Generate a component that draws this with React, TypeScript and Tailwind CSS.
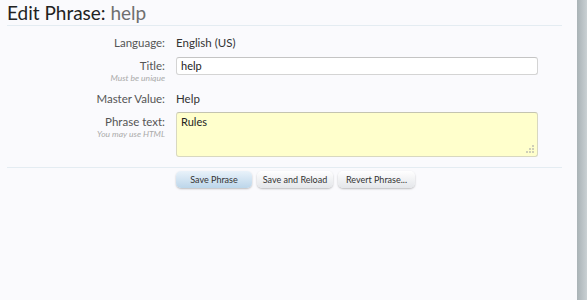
import React from "react";

function Grip() {
  return (
    <svg width="8" height="8" viewBox="0 0 8 8" className="absolute right-[3px] bottom-[3px]">
      <rect x="6" y="0" width="2" height="2" fill="#cfcfb8" />
      <rect x="3" y="3" width="2" height="2" fill="#cfcfb8" />
      <rect x="6" y="3" width="2" height="2" fill="#cfcfb8" />
      <rect x="0" y="6" width="2" height="2" fill="#cfcfb8" />
      <rect x="3" y="6" width="2" height="2" fill="#cfcfb8" />
      <rect x="6" y="6" width="2" height="2" fill="#cfcfb8" />
    </svg>
  );
}

export default function App() {
  const font = { fontFamily: "Lato, 'Open Sans', sans-serif" };
  return (
    <div className="flex w-[587px] h-[300px] bg-[#fafafd]" style={font}>
      <div className="flex-1 flex flex-col pl-[7px] pr-[15px]">
        <h1 className="text-[19px] leading-[25px] text-[#222] font-normal">
          Edit Phrase: <span className="text-[#6f6f6f]">help</span>
        </h1>
        <div className="h-px bg-[#e4ecf2]" />
        <div className="grid grid-cols-[158px_1fr] gap-x-[11px] pr-[24px] text-[11.5px] text-[#333] mt-[10px]">
          <div className="text-right text-[#555] leading-[14px]">Language:</div>
          <div className="leading-[14px]">English (US)</div>

          <div className="text-right mt-[7px]">
            <div className="text-[#555] leading-[14px] mt-[2px]">Title:</div>
            <div className="text-[8.5px] italic text-[#aaa] leading-[10px]">Must be unique</div>
          </div>
          <div className="mt-[7px]">
            <div className="h-[18px] bg-white border border-[#d4d4d4] border-t-[#c4c4c4] rounded-[3px] px-[4px] text-[11px] leading-[16px] text-[#222]">
              help
            </div>
          </div>

          <div className="text-right text-[#555] leading-[14px] mt-[9px]">Master Value:</div>
          <div className="leading-[14px] mt-[9px]">Help</div>

          <div className="text-right mt-[6px]">
            <div className="text-[#555] leading-[14px] mt-[3px]">Phrase text:</div>
            <div className="text-[8.5px] italic text-[#aaa] leading-[10px]">You may use HTML</div>
          </div>
          <div className="mt-[6px]">
            <div className="relative h-[45px] bg-[#ffffcc] border border-[#d8d8c0] border-t-[#c4c4b0] rounded-[3px] px-[4px] pt-[2px] text-[11px] leading-[14px] text-[#222]">
              Rules
              <Grip />
            </div>
          </div>
        </div>
        <div className="h-px bg-[#e4ecf2] mt-[10px]" />
        <div className="flex gap-[5px] pl-[169px] mt-[3px]">
          <button className="w-[76px] h-[17px] rounded-[5px] bg-gradient-to-b from-[#e9f2fa] to-[#bcd6ea] text-[9px] text-[#333] shadow-[0_1px_2px_rgba(0,0,0,0.25)] leading-[17px]">
            Save Phrase
          </button>
          <button className="w-[76px] h-[17px] rounded-[5px] bg-gradient-to-b from-[#ffffff] to-[#e4e6ea] text-[9px] text-[#333] shadow-[0_1px_2px_rgba(0,0,0,0.25)] leading-[17px]">
            Save and Reload
          </button>
          <button className="w-[77px] h-[17px] rounded-[5px] bg-gradient-to-b from-[#ffffff] to-[#e4e6ea] text-[9px] text-[#333] shadow-[0_1px_2px_rgba(0,0,0,0.25)] leading-[17px]">
            Revert Phrase...
          </button>
        </div>
      </div>
      <div className="w-[10px] h-full bg-gradient-to-r from-[#a9b2b6] to-[#c9d0d3]" />
    </div>
  );
}
